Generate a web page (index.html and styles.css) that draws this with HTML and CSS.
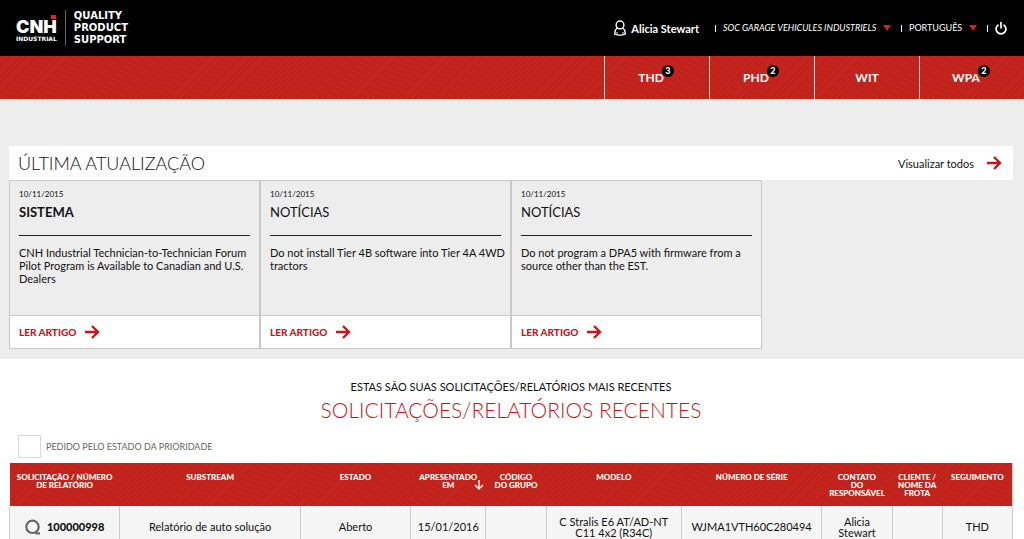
FILE: index.html
```html
<!DOCTYPE html>
<html lang="pt">
<head>
<meta charset="utf-8">
<meta name="viewport" content="width=device-width, initial-scale=1">
<title>CNH Industrial – Quality Product Support</title>
<link rel="stylesheet" href="styles.css">
</head>
<body>
<svg class="defs" aria-hidden="true">
  <symbol id="arrow" viewBox="0 0 16 16"><path d="M1 8h13M8 2l6 6-6 6" fill="none" stroke="currentColor" stroke-width="2.4"/></symbol>
</svg>
<header class="topbar">
  <a class="brand" href="#">
    <span class="logo"><span class="logo-name">CNH<i class="logo-dot"></i></span><span class="logo-sub">INDUSTRIAL</span></span>
    <span class="tagline"><span>QUALITY</span><span>PRODUCT</span><span>SUPPORT</span></span>
  </a>
  <div class="account">
    <a class="user" href="#">
      <svg class="user-icon" viewBox="0 0 12 16" aria-hidden="true"><g fill="none" stroke="currentColor" stroke-width="1.4"><path d="M3.2 8C1.500 9.200.8 10.800.8 13v1.200Q6 16 11.200 14.200V13c0-2.200-.7-3.800-2.400-5"/><circle cx="6" cy="4.900" r="3.900"/><path d="M3 13.500v-1.200M9 13.500v-1.200"/></g></svg>
      <span>Alicia Stewart</span>
    </a>
    <span class="pick dealer"><select aria-label="Concessionária"><option>SOC GARAGE VEHICULES INDUSTRIELS</option></select></span>
    <span class="pick"><select aria-label="Idioma"><option>PORTUGUÊS</option></select></span>
    <button class="power" type="button" aria-label="Sair"><svg viewBox="0 0 12 14" aria-hidden="true"><path d="M3.500 3.700a4.900 4.900 0 1 0 5 0M6 1v6.500" fill="none" stroke="currentColor" stroke-width="1.700"/></svg></button>
  </div>
</header>
<nav class="nav textured">
  <a href="#"><span class="tab">THD<b>3</b></span></a>
  <a href="#"><span class="tab">PHD<b>2</b></span></a>
  <a href="#"><span class="tab">WIT</span></a>
  <a href="#"><span class="tab">WPA<b>2</b></span></a>
</nav>
<main>
  <section class="updates">
    <div class="updates-head">
      <h2>ÚLTIMA ATUALIZAÇÃO</h2>
      <a class="see-all" href="#">Visualizar todos <svg class="arrow"><use href="#arrow"/></svg></a>
    </div>
    <div class="cards">
      <article class="card">
        <div class="card-body"><time>10/11/2015</time><h3 class="strong">SISTEMA</h3><p>CNH Industrial Technician-to-Technician Forum Pilot Program is Available to Canadian and U.S. Dealers</p></div>
        <a class="read" href="#">LER ARTIGO <svg class="arrow"><use href="#arrow"/></svg></a>
      </article>
      <article class="card">
        <div class="card-body"><time>10/11/2015</time><h3>NOTÍCIAS</h3><p>Do not install Tier 4B software into Tier 4A 4WD tractors</p></div>
        <a class="read" href="#">LER ARTIGO <svg class="arrow"><use href="#arrow"/></svg></a>
      </article>
      <article class="card">
        <div class="card-body"><time>10/11/2015</time><h3>NOTÍCIAS</h3><p>Do not program a DPA5 with firmware from a source other than the EST.</p></div>
        <a class="read" href="#">LER ARTIGO <svg class="arrow"><use href="#arrow"/></svg></a>
      </article>
    </div>
  </section>
  <section class="recent">
    <p class="eyebrow">ESTAS SÃO SUAS SOLICITAÇÕES/RELATÓRIOS MAIS RECENTES</p>
    <h1>SOLICITAÇÕES/RELATÓRIOS RECENTES</h1>
    <label class="priority"><input type="checkbox"> PEDIDO PELO ESTADO DA PRIORIDADE</label>
    <table>
      <colgroup><col class="c-id"><col class="c-sub"><col class="c-state"><col class="c-date"><col class="c-group"><col class="c-model"><col class="c-serial"><col class="c-contact"><col class="c-client"><col class="c-follow"></colgroup>
      <thead class="textured">
        <tr><th>SOLICITAÇÃO / NÚMERO<br>DE RELATÓRIO</th><th>SUBSTREAM</th><th>ESTADO</th><th class="sorted">APRESENTADO<br>EM<svg class="sort" viewBox="0 0 10 10" aria-hidden="true"><path d="M5 0v9M1 5l4 4 4-4" fill="none" stroke="currentColor" stroke-width="1.400"/></svg></th><th>CÓDIGO<br>DO GRUPO</th><th>MODELO</th><th>NÚMERO DE SÉRIE</th><th>CONTATO<br>DO<br>RESPONSÁVEL</th><th>CLIENTE /<br>NOME DA<br>FROTA</th><th>SEGUIMENTO</th></tr>
      </thead>
      <tbody>
        <tr><td><a class="ticket" href="#"><svg viewBox="0 0 16 16" aria-hidden="true"><g fill="none" stroke="#666" stroke-width="2.200"><circle cx="7.500" cy="7.800" r="6.200"/><path d="M10.500 14.400h4.500"/></g></svg>100000998</a></td><td>Relatório de auto solução</td><td>Aberto</td><td>15/01/2016</td><td></td><td>C Stralis E6 AT/AD-NT<br>C11 4x2 (R34C)</td><td>WJMA1VTH60C280494</td><td>Alicia<br>Stewart</td><td></td><td>THD</td></tr>
      </tbody>
    </table>
  </section>
</main>
</body>
</html>
```
FILE: styles.css
```css
* { box-sizing: border-box; }
body { margin: 0; background: #fff; color: #111; font: 11px/13px "Gill Sans", "Gill Sans MT", Lato, "Liberation Sans", sans-serif; }
h1, h2, h3, p { margin: 0; font-weight: 400; }
a { color: inherit; text-decoration: none; }
.defs { position: absolute; width: 0; height: 0; }
.textured { background: repeating-linear-gradient(135deg, #c5251c 0 2px, #bd231a 2px 4px); color: #fff; }
.arrow { width: 16px; height: 16px; color: #c4161c; }

.topbar { display: flex; justify-content: space-between; align-items: center; height: 56px; padding: 0 17px 0 16px; background: #000; color: #fff; }
.brand { display: flex; align-items: center; }
.logo { display: flex; flex-direction: column; padding: 4px 8px 0 0; }
.logo-name { position: relative; font: 900 18px/17px Inter, "Liberation Sans", sans-serif; }
.logo-dot { position: absolute; top: -3px; right: 1px; width: 5px; height: 4px; background: #e0252b; }
.logo-sub { font: 700 6px/7px "DejaVu Sans", sans-serif; }
.tagline { display: flex; flex-direction: column; padding-left: 8px; border-left: 1px solid #666; font: 700 10px/12px "DejaVu Sans", sans-serif; }

.account { display: flex; align-items: center; }
.user { display: flex; align-items: center; gap: 5px; margin-right: 16px; font-size: 11px; font-weight: 700; }
.user-icon { width: 12px; height: 16px; }
.pick { display: flex; align-items: center; margin-right: 10px; }
.pick::before { content: ""; width: 1px; height: 7px; margin-right: 7px; background: #fff; }
.pick::after { content: ""; margin-left: 6px; border: 4px solid transparent; border-top: 6px solid #d0222a; border-bottom: 0; }
.pick select { appearance: none; padding: 0; border: 0; background: none; color: #fff; font: 9px/14px "Gill Sans", "Gill Sans MT", Lato, sans-serif; }
.dealer select { font-style: italic; }
.power { display: flex; align-items: center; padding: 0; border: 0; background: none; color: #fff; }
.power::before { content: ""; width: 1px; height: 7px; margin-right: 7px; background: #fff; }
.power svg { width: 12px; height: 14px; }

.nav { display: flex; justify-content: flex-end; height: 43px; }
.nav a { display: flex; align-items: center; justify-content: center; width: 105px; border-left: 1px solid #fbd9d0; font-size: 12px; font-weight: 700; padding-right: 12px; }
.nav a:nth-child(3) { padding-right: 0; }
.tab { position: relative; }
.tab b { position: absolute; left: 100%; top: -6px; margin-left: -2px; width: 12px; height: 12px; border-radius: 50%; background: #000; font-size: 9px; line-height: 12px; text-align: center; }

.updates { padding: 47px 11px 10px 9px; background: #ededed; }
.updates-head { display: flex; justify-content: space-between; align-items: center; height: 34px; padding: 0 11px 0 9px; background: #fff; }
.updates-head h2 { font-size: 18px; line-height: 22px; font-weight: 300; }
.see-all { display: flex; align-items: center; gap: 12px; }
.cards { display: grid; grid-template-columns: repeat(4, 1fr); }
.card { display: flex; flex-direction: column; border: 1px solid #c8c8c8; }
.card-body { min-height: 134px; padding: 8px 2px 8px 9px; }
.card time { display: block; font-size: 8px; line-height: 10px; }
.card h3 { margin-right: 7px; padding: 5px 0 15px; border-bottom: 1px solid #222; font-size: 13px; line-height: 16px; }
.card h3.strong { font-weight: 700; }
.card p { padding-top: 10px; }
.read { display: flex; align-items: center; gap: 8px; height: 33px; padding: 0 9px; border-top: 1px solid #c8c8c8; background: #fff; color: #c4161c; font-size: 10px; font-weight: 900; }

.recent { padding: 21px 11px 0 9px; }
.eyebrow { font-size: 11px; line-height: 14px; text-align: center; }
.recent h1 { color: #c4161c; font-size: 21px; line-height: 32px; font-weight: 300; text-align: center; }
.priority { display: flex; align-items: center; gap: 5px; width: max-content; margin: 9px 9px 5px; color: #666; font-size: 9px; }
.priority input { appearance: none; width: 23px; height: 23px; margin: 0; border: 1px solid #e0d4d6; background: #fff; }

table { width: 100%; table-layout: fixed; border-collapse: collapse; }
.c-id { width: 11%; } .c-sub { width: 18%; } .c-state { width: 11%; } .c-date { width: 7.500%; } .c-group { width: 6%; }
.c-model { width: 13.500%; } .c-serial { width: 14%; } .c-contact { width: 7%; } .c-client { width: 5%; } .c-follow { width: 7%; }
th { height: 43px; padding: 10px 0 0; font-size: 8px; line-height: 8px; font-weight: 900; vertical-align: top; white-space: nowrap; }
.sorted { position: relative; }
.sort { position: absolute; right: 2px; top: 17px; width: 10px; height: 10px; }
td { height: 42px; padding: 0; border: 1px solid #ccc; border-top: 0; background: #f5f5f5; text-align: center; line-height: 11px; white-space: nowrap; }
.ticket { display: flex; align-items: center; justify-content: center; gap: 6px; font-weight: 900; }
.ticket svg { width: 16px; height: 16px; }
```
